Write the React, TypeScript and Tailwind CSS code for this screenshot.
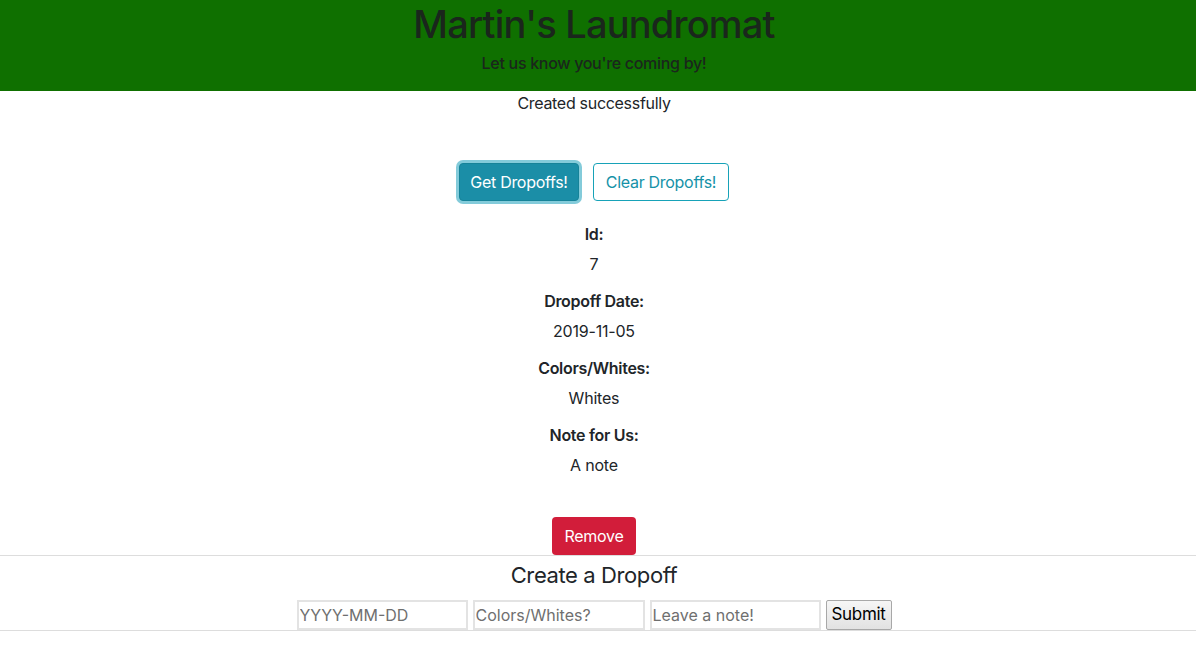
import React from "react";

const font = { fontFamily: "Inter, 'Noto Sans', 'Liberation Sans', sans-serif" };

function Field({ label, value }: { label: string; value: string }) {
  return (
    <div className="flex flex-col items-center">
      <div className="text-[16px] leading-[24px] font-semibold text-[#212529] tracking-[-0.3px]">{label}</div>
      <div className="text-[16px] leading-[24px] text-[#212529] mt-[6px] tracking-[-0.2px]">{value}</div>
    </div>
  );
}

export default function App() {
  return (
    <div className="min-h-[655px] bg-white text-[#212529]" style={font}>
      <header className="bg-[#0f7000] h-[91px] flex flex-col items-center pr-[8px]">
        <h1 className="text-[38px] leading-[48px] font-medium text-[#1a261c] tracking-[-0.8px]">Martin's Laundromat</h1>
        <p className="mt-[3px] text-[16px] leading-[24px] font-medium text-[#1a261c] tracking-[-0.3px]">Let us know you're coming by!</p>
      </header>
      <div className="flex flex-col items-center pr-[8px]">
        <div className="text-[16px] leading-[24px] tracking-[-0.3px]">Created successfully</div>
        <div className="mt-[48px] flex gap-[14px]">
          <button className="h-[38px] w-[120px] rounded-[4px] bg-[#1b8ea7] border border-[#168399] text-white text-[16px] tracking-[-0.3px] shadow-[0_0_0_3px_rgba(90,185,205,0.75)]">
            Get Dropoffs!
          </button>
          <button className="h-[38px] w-[136px] rounded-[4px] bg-white border border-[#17a2b8] text-[#1592a8] text-[16px] tracking-[-0.3px]">
            Clear Dropoffs!
          </button>
        </div>
        <div className="mt-[21px] flex flex-col items-center gap-[13px]">
          <Field label="Id:" value="7" />
          <Field label="Dropoff Date:" value="2019-11-05" />
          <Field label="Colors/Whites:" value="Whites" />
          <Field label="Note for Us:" value="A note" />
        </div>
        <button className="mt-[40px] h-[38px] w-[84px] rounded-[4px] bg-[#d21d3a] text-white text-[16px] tracking-[-0.3px]">
          Remove
        </button>
      </div>
      <div className="border-t border-[#dddddd] flex flex-col items-center">
        <h2 className="mt-[5px] pr-[8px] text-[22px] leading-[29px] font-normal tracking-[-0.4px]">Create a Dropoff</h2>
        <div className="mt-[10px] pr-[8px] flex items-center gap-[5px]">
          <input placeholder="YYYY-MM-DD" className="w-[171px] h-[30px] border-2 border-[#e3e3e3] px-[1px] text-[16px] placeholder:text-[#6f6f6f] outline-none" />
          <input placeholder="Colors/Whites?" className="w-[172px] h-[30px] border-2 border-[#e3e3e3] px-[1px] text-[16px] placeholder:text-[#6f6f6f] outline-none" />
          <input placeholder="Leave a note!" className="w-[171px] h-[30px] border-2 border-[#e3e3e3] px-[1px] text-[16px] placeholder:text-[#6f6f6f] outline-none" />
          <button className="w-[66px] h-[30px] border border-[#a8a8a8] rounded-[2px] bg-gradient-to-b from-[#f6f6f6] to-[#e2e2e2] text-[17px] text-black tracking-[-0.3px]">
            Submit
          </button>
        </div>
        <div className="w-full border-t border-[#dddddd]" />
      </div>
    </div>
  );
}
